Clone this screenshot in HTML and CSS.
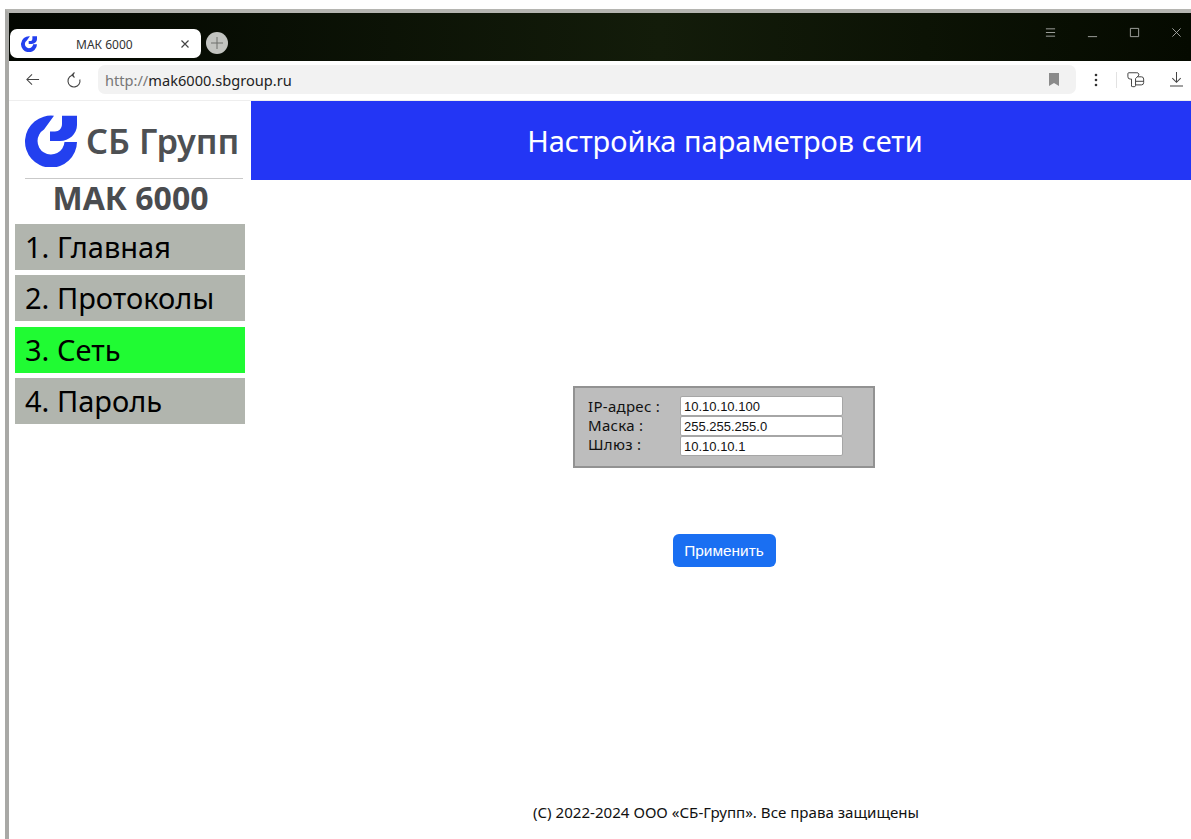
FILE: index.html
```html
<!DOCTYPE html>
<html lang="ru">
<head>
<meta charset="utf-8">
<title>МАК 6000</title>
<link rel="stylesheet" href="styles.css">
</head>
<body>
<div class="window">
  <div class="tabstrip">
    <div class="tab">
      <svg class="tab-logo" viewBox="0 0 52 52"><use href="#mark"/></svg>
      <span class="tab-title">МАК 6000</span>
      <svg class="tab-close" viewBox="0 0 10 10"><path d="M1.5 1.5l7 7M8.5 1.5l-7 7"/></svg>
    </div>
    <div class="newtab"><svg viewBox="0 0 12 12"><path d="M6 0v12M0 6h12"/></svg></div>
    <div class="winbtns">
      <svg viewBox="0 0 12 10"><path d="M1 1h10M1 5h10M1 9h10"/></svg>
      <svg viewBox="0 0 12 10"><path d="M1 9.500h10"/></svg>
      <svg viewBox="0 0 12 10"><path d="M1.500 .5h9v9h-9z"/></svg>
      <svg viewBox="0 0 12 10"><path d="M1.500 .5l9 9M10.500 .5l-9 9"/></svg>
    </div>
  </div>
  <div class="toolbar">
    <svg class="tool back" viewBox="0 0 16 16"><path d="M15 8H2M7.500 2.500L2 8l5.500 5.500"/></svg>
    <svg class="tool reload" viewBox="0 0 16 16"><path d="M8 3a6 6 0 1 0 5.800 4.500M8.500 .5L6 3l2.500 2.500"/></svg>
    <div class="address">
      <span class="url"><span class="scheme">http://</span>mak6000.sbgroup.ru</span>
      <svg class="bookmark" viewBox="0 0 10 13"><path d="M0 0h10v13L5 10 0 13z"/></svg>
    </div>
    <svg class="dots" viewBox="0 0 4 14"><circle cx="2" cy="2" r="1.300"/><circle cx="2" cy="7" r="1.300"/><circle cx="2" cy="12" r="1.300"/></svg>
    <span class="divider"></span>
    <svg class="tool keys" viewBox="0 0 20 18"><path d="M2 1.500h9a2 2 0 0 1 1.500 3.500l-3 3v7.500a1.500 1.500 0 0 1-1.500 1.500H6.500A1.500 1.500 0 0 1 5 15V8.500H3.500A2.500 2.500 0 0 1 1 6V2.500a1 1 0 0 1 1-1zM11.500 6H16a2.500 2.500 0 0 1 2.500 2.500v4A2.500 2.500 0 0 1 16 15H9.500M9.500 11h9"/></svg>
    <svg class="tool download" viewBox="0 0 14 16"><path d="M7 0v11M2.500 6.500L7 11l4.500-4.500M0 15h14"/></svg>
  </div>
  <div class="page">
    <aside class="sidebar">
      <div class="brand">
        <svg class="logo" viewBox="0 0 52 52">
          <g id="mark">
            <path d="M29 .8A26 26 0 1 0 52 27H39.500A13.500 13.500 0 1 1 19 14.500z"/>
            <path d="M37 .7H52V10C52 19 44 26 35 26H25V16.500H30C34 16.500 37 13.500 37 9z"/>
          </g>
        </svg>
        <span class="brand-name">СБ Групп</span>
      </div>
      <div class="model">МАК 6000</div>
      <nav class="menu">
        <a class="item">1. Главная</a>
        <a class="item">2. Протоколы</a>
        <a class="item active">3. Сеть</a>
        <a class="item">4. Пароль</a>
      </nav>
    </aside>
    <main class="content">
      <h1 class="title">Настройка параметров сети</h1>
      <form class="netform">
        <div class="fields">
          <div class="labels">
            <span>IP-адрес :</span>
            <span>Маска :</span>
            <span>Шлюз :</span>
          </div>
          <div class="inputs">
            <input type="text" value="10.10.10.100">
            <input type="text" value="255.255.255.0">
            <input type="text" value="10.10.10.1">
          </div>
        </div>
        <button class="apply" type="button">Применить</button>
      </form>
      <footer class="copyright">(C) 2022-2024 ООО «СБ-Групп». Все права защищены</footer>
    </main>
  </div>
</div>
</body>
</html>
```
FILE: styles.css
```css
* { box-sizing: border-box; }
html, body { height: 100%; }
body {
  margin: 0;
  padding: 9px 0 0 5px;
  background: #fff;
  overflow: hidden;
  font-family: "Noto Sans", sans-serif;
}
.window {
  height: 830px;
  border-top: 4px solid #b5b5b1;
  border-left: 4px solid #a9a9a6;
  display: flex;
  flex-direction: column;
}
.tabstrip {
  height: 48px;
  flex: none;
  background: linear-gradient(90deg, #020600, #131c0a 55%, #050a00);
  display: flex;
  align-items: flex-end;
  padding: 0 0 3px 1px;
}
.tab {
  width: 191px;
  height: 29px;
  background: #fff;
  border-radius: 7px;
  display: flex;
  align-items: center;
  padding: 0 11px;
}
.tab-logo { width: 16px; height: 16px; fill: #2340ef; flex: none; }
.tab-title {
  flex: 1;
  margin-left: 39px;
  padding-top: 2px;
  font: 12px "Noto Sans", sans-serif;
  color: #333;
}
.tab-close { width: 10px; height: 10px; stroke: #444; fill: none; stroke-width: 1.200; }
.newtab {
  width: 22px;
  height: 22px;
  margin: 0 0 4px 5px;
  border-radius: 50%;
  background: #c2c4c0;
  display: flex;
  align-items: center;
  justify-content: center;
}
.newtab svg { width: 12px; height: 12px; stroke: #6e706c; stroke-width: 1; fill: none; }
.winbtns {
  margin-left: auto;
  align-self: flex-start;
  display: flex;
  gap: 31px;
  padding: 14px 9px 0 0;
}
.winbtns svg { width: 11px; height: 11px; stroke: #a9aba6; stroke-width: 1; fill: none; }
.toolbar {
  height: 40px;
  flex: none;
  background: #fff;
  display: flex;
  align-items: center;
  border-bottom: 1px solid #eee;
  padding: 0 8px 2px 16px;
}
.tool { stroke: #444; fill: none; stroke-width: 1.100; flex: none; }
.back { width: 15px; height: 15px; }
.reload { width: 16px; height: 16px; margin-left: 26px; }
.address {
  flex: 1;
  height: 29px;
  margin-left: 16px;
  background: #f2f2f2;
  border-radius: 7px;
  display: flex;
  align-items: center;
  justify-content: space-between;
  padding: 0 17px 0 7px;
}
.url { font: 14.600px "Noto Sans", sans-serif; color: #222; }
.scheme { color: #777; }
.bookmark { width: 10px; height: 13px; fill: #8b8b8b; }
.dots { width: 4px; height: 14px; margin-left: 18px; fill: #333; flex: none; }
.divider { width: 1px; height: 16px; margin-left: 18px; background: #e2e2e2; flex: none; }
.keys { width: 18px; height: 17px; margin-left: 10px; }
.download { width: 13px; height: 15px; margin-left: 25px; }
.page { flex: 1; display: flex; min-height: 0; }
.sidebar {
  width: 242px;
  flex: none;
  padding: 0 5px 0 6px;
}
.brand {
  height: 78px;
  margin: 0 3px 0 10px;
  padding-top: 14px;
  display: flex;
  align-items: flex-start;
  border-bottom: 1px solid #c9c9c9;
}
.logo { width: 52px; height: 52px; fill: #2340ef; flex: none; }
.brand-name {
  margin: 2px 0 0 9px;
  font: 600 34.400px "Noto Sans", sans-serif;
  color: #4d5053;
  white-space: nowrap;
}
.model {
  height: 45px;
  text-align: center;
  font: 700 32px "Noto Sans", sans-serif;
  line-height: 38px;
  color: #4a4c4f;
}
.menu { display: flex; flex-direction: column; gap: 5.400px; width: 230px; }
.item {
  height: 46px;
  padding-left: 10px;
  background: #b1b5ae;
  color: #000;
  font-size: 29px;
  line-height: 46px;
  white-space: nowrap;
}
.active { background: #20fb33; }
.content {
  flex: 1;
  display: flex;
  flex-direction: column;
  align-items: center;
  padding-left: 6px;
}
.title {
  align-self: stretch;
  height: 79px;
  margin: 0 0 0 -6px;
  padding-left: 8px;
  background: #2336f5;
  color: #fff;
  font-size: 29px;
  font-weight: 400;
  line-height: 80px;
  text-align: center;
}
.netform { display: flex; flex-direction: column; align-items: center; margin-top: 206px; }
.fields {
  width: 302px;
  height: 82px;
  border: 2px solid #929292;
  background: #bdbdbd;
  display: flex;
  padding: 8px 0 0 13px;
  gap: 20px;
}
.labels {
  width: 72px;
  display: flex;
  flex-direction: column;
  font-size: 15px;
  letter-spacing: .3px;
  line-height: 19px;
  padding-top: 1px;
  color: #111;
  white-space: nowrap;
}
.inputs { display: flex; flex-direction: column; }
.inputs input {
  width: 163px;
  height: 20px;
  border: 1px solid #a6a6a6;
  border-radius: 2px;
  padding: 0 3px;
  font: 13px "Liberation Sans", sans-serif;
  color: #111;
  background: #fff;
}
.apply {
  width: 103px;
  height: 33px;
  margin-top: 66px;
  border: 0;
  border-radius: 6px;
  background: #1a6ff2;
  color: #fff;
  font: 15.400px "Liberation Sans", sans-serif;
}
.copyright {
  margin: auto 0 17px 4px;
  font-size: 15.100px;
  color: #111;
}
```
